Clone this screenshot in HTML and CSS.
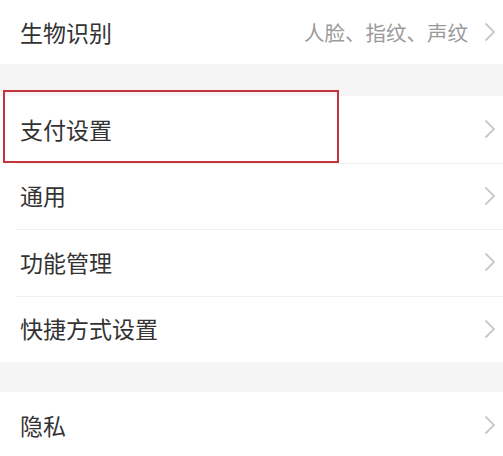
FILE: index.html
```html
<!DOCTYPE html>
<html lang="zh-CN">
<head>
  <meta charset="UTF-8">
  <meta name="viewport" content="width=device-width, initial-scale=1.0">
  <title>设置</title>
  <link rel="stylesheet" href="styles.css">
</head>
<body>
<div class="group first">
  <div class="row">
    <span class="label">生物识别</span>
    <span class="value">人脸、指纹、声纹</span>
    <svg class="arrow" viewBox="0 0 12 20"><path d="M1.5 1.5 L10 10 L1.5 18.5" /></svg>
  </div>
</div>

<div class="gap"></div>

<div class="group">
  <div class="row mark">
    <span class="label">支付设置</span>
    <svg class="arrow" viewBox="0 0 12 20"><path d="M1.5 1.5 L10 10 L1.5 18.5" /></svg>
    <div class="highlight"></div>
  </div>
  <div class="row">
    <span class="label">通用</span>
    <svg class="arrow" viewBox="0 0 12 20"><path d="M1.5 1.5 L10 10 L1.5 18.5" /></svg>
  </div>
  <div class="row">
    <span class="label">功能管理</span>
    <svg class="arrow" viewBox="0 0 12 20"><path d="M1.5 1.5 L10 10 L1.5 18.5" /></svg>
  </div>
  <div class="row">
    <span class="label">快捷方式设置</span>
    <svg class="arrow" viewBox="0 0 12 20"><path d="M1.5 1.5 L10 10 L1.5 18.5" /></svg>
  </div>
</div>

<div class="gap small"></div>

<div class="group">
  <div class="row">
    <span class="label">隐私</span>
    <svg class="arrow" viewBox="0 0 12 20"><path d="M1.5 1.5 L10 10 L1.5 18.5" /></svg>
  </div>
</div>
</body>
</html>
```

FILE: styles.css
```css
body {
  margin: 0;
  font-family: "Noto Sans CJK SC", "Noto Sans", sans-serif;
  background-color: #ffffff;
  color: #333;
  overflow: hidden;
}
.group {
  background-color: #ffffff;
}
.row {
  position: relative;
  display: flex;
  align-items: center;
  height: 66.5px;
  padding: 0 7px 0 20px;
}
.first .row {
  height: 64px;
}
.row + .row::before {
  content: "";
  position: absolute;
  top: 0;
  left: 16px;
  right: 0;
  border-top: 1px solid #f0f0f0;
}
.label {
  flex: 1;
  font-size: 23px;
  line-height: 1;
  color: #333;
}
.value {
  font-size: 20.5px;
  line-height: 1;
  color: #9a9a9a;
  margin-right: 16px;
}
.arrow {
  width: 12px;
  height: 20px;
  fill: none;
  stroke: #c8c8c8;
  stroke-width: 1.8;
}
.gap {
  height: 32px;
  background-color: #f5f5f5;
}
.gap.small {
  height: 30px;
}
.highlight {
  position: absolute;
  left: 3px;
  top: -6px;
  width: 332px;
  height: 69px;
  border: 2px solid #c3343f;
}
```
